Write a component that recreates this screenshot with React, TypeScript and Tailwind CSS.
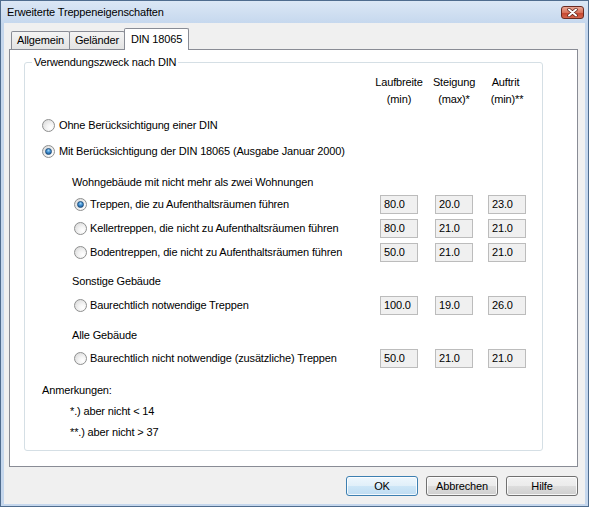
import React from "react";

const font = { fontFamily: '"Liberation Sans", Arial, sans-serif' };

function Radio({ checked = false }: { checked?: boolean }) {
  return (
    <div className="w-[13px] h-[13px] flex-none rounded-full border border-[#8e8f8f] bg-[radial-gradient(circle_at_70%_70%,#ffffff_0%,#f4f4f4_35%,#d4d4d4_100%)] flex items-center justify-center">
      {checked && (
        <div className="w-[7px] h-[7px] rounded-full border border-[#1e4e7c] bg-[radial-gradient(circle_at_50%_30%,#9fd4f6_0%,#3f8ed0_45%,#174d87_100%)]" />
      )}
    </div>
  );
}

function Field({ value }: { value: string }) {
  return (
    <div className="w-[38px] h-[19px] flex-none border border-[#bcbcbc] bg-[#f0f0f0] px-[3px] flex items-center text-black">
      {value}
    </div>
  );
}

function Row({
  label,
  values,
  checked = false,
  className = "",
}: {
  label: string;
  values: string[];
  checked?: boolean;
  className?: string;
}) {
  return (
    <div className={"h-[20px] flex items-center " + className}>
      <div className="w-[355px] flex-none flex items-center pl-[49px] gap-[3px] whitespace-nowrap">
        <Radio checked={checked} />
        <span>{label}</span>
      </div>
      <Field value={values[0]} />
      <div className="w-[17px] flex-none" />
      <Field value={values[1]} />
      <div className="w-[15px] flex-none" />
      <Field value={values[2]} />
    </div>
  );
}

function Label({ text, className = "" }: { text: string; className?: string }) {
  return (
    <div className={"h-[20px] flex items-center pl-[47px] " + className}>
      {text}
    </div>
  );
}

function Tab({ text, active = false }: { text: string; active?: boolean }) {
  if (active) {
    return (
      <div className="relative z-10 -mb-px h-[22px] w-[65px] border border-b-0 border-[#898c95] bg-white flex items-center justify-center rounded-t-[2px] -ml-px">
        {text}
      </div>
    );
  }
  return (
    <div className="h-[18px] border border-b-0 border-[#898c95] bg-[linear-gradient(to_bottom,#f4f4f4,#e3e3e3)] flex items-center justify-center px-[5px] rounded-t-[2px] -ml-px first:ml-0">
      {text}
    </div>
  );
}

function Button({ text, primary = false }: { text: string; primary?: boolean }) {
  return (
    <div
      className={
        "w-[72px] h-[20px] rounded-[3px] border flex items-center justify-center shadow-[inset_0_0_0_1px_rgba(255,255,255,0.8)] " +
        (primary
          ? "border-[#3c7fb1] bg-[linear-gradient(to_bottom,#eef7fd_0%,#e0eff9_50%,#cde6f7_50%,#bedcf2_100%)]"
          : "border-[#707070] bg-[linear-gradient(to_bottom,#f2f2f2_0%,#ebebeb_50%,#dddddd_50%,#cfcfcf_100%)]")
      }
    >
      {text}
    </div>
  );
}

export default function App() {
  return (
    <div
      className="w-[589px] h-[507px] flex flex-col border border-[#4f6c8e] bg-[#c5d7ed] text-[11px] tracking-[-0.15px] text-black"
      style={font}
    >
      {/* title bar */}
      <div className="h-[22px] flex-none flex items-center justify-between pl-[6px] pr-[4px] bg-[linear-gradient(to_bottom,#dbe7f5,#c6d8ee)]">
        <span className="text-[11px]">Erweiterte Treppeneigenschaften</span>
        <div className="w-[23px] h-[13px] rounded-[3px] border border-[#6b2a20] bg-[linear-gradient(to_bottom,#eaa895_0%,#d9735c_50%,#c5462f_55%,#d5654c_100%)] flex items-center justify-center">
          <svg width="11" height="9" viewBox="0 0 11 9">
            <path d="M2 1.5 L9 7.5 M9 1.5 L2 7.5" stroke="#5a2118" strokeWidth="3.4" strokeLinecap="round" />
            <path d="M2 1.5 L9 7.5 M9 1.5 L2 7.5" stroke="#ffffff" strokeWidth="2" strokeLinecap="round" />
          </svg>
        </div>
      </div>

      {/* client */}
      <div className="flex-1 mx-[3px] mb-[2px] bg-[#f0f0f0] flex flex-col">
        <div className="h-[26px] flex-none flex items-end pl-[7px]">
          <Tab text="Allgemein" />
          <Tab text="Geländer" />
          <Tab text="DIN 18065" active />
        </div>

        <div className="ml-[5px] w-[569px] h-[418px] flex-none border border-[#898c95] bg-white">
          <div className="relative mt-[12px] ml-[14px] w-[519px] border border-[#d5dfe5] rounded-[3px] pb-[8px]">
            <span className="absolute -top-[8px] left-[7px] bg-white px-[2px] leading-[14px]">
              Verwendungszweck nach DIN
            </span>

            {/* column headers */}
            <div className="h-[52px] flex pt-[11px] leading-[17px]">
              <div className="w-[355px] flex-none" />
              <div className="w-[38px] flex-none flex flex-col items-center whitespace-nowrap">
                <span>Laufbreite</span>
                <span>(min)</span>
              </div>
              <div className="w-[17px] flex-none" />
              <div className="w-[38px] flex-none flex flex-col items-center whitespace-nowrap">
                <span>Steigung</span>
                <span>(max)*</span>
              </div>
              <div className="w-[15px] flex-none" />
              <div className="w-[38px] flex-none flex flex-col items-center whitespace-nowrap">
                <span className="pr-[3px]">Auftrit</span>
                <span>(min)**</span>
              </div>
            </div>

            <div className="h-[20px] flex items-center pl-[17px] gap-[4px]">
              <Radio />
              <span>Ohne Berücksichtigung einer DIN</span>
            </div>
            <div className="h-[20px] mt-[6px] flex items-center pl-[17px] gap-[4px]">
              <Radio checked />
              <span>Mit Berücksichtigung der DIN 18065 (Ausgabe Januar 2000)</span>
            </div>

            <Label text="Wohngebäude mit nicht mehr als zwei Wohnungen" className="mt-[11px]" />
            <Row
              label="Treppen, die zu Aufenthaltsräumen führen"
              values={["80.0", "20.0", "23.0"]}
              checked
              className="mt-[2px]"
            />
            <Row
              label="Kellertreppen, die nicht zu Aufenthaltsräumen führen"
              values={["80.0", "21.0", "21.0"]}
              className="mt-[4px]"
            />
            <Row
              label="Bodentreppen, die nicht zu Aufenthaltsräumen führen"
              values={["50.0", "21.0", "21.0"]}
              className="mt-[4px]"
            />

            <Label text="Sonstige Gebäude" className="mt-[9px]" />
            <Row
              label="Baurechtlich notwendige Treppen"
              values={["100.0", "19.0", "26.0"]}
              className="mt-[4px]"
            />

            <Label text="Alle Gebäude" className="mt-[10px]" />
            <Row
              label="Baurechtlich nicht notwendige (zusätzliche) Treppen"
              values={["50.0", "21.0", "21.0"]}
              className="mt-[3px]"
            />

            <div className="h-[20px] mt-[12px] flex items-center pl-[17px]">Anmerkungen:</div>
            <div className="h-[20px] mt-[1px] flex items-center pl-[45px]">*.) aber nicht &lt; 14</div>
            <div className="h-[20px] mt-[1px] flex items-center pl-[45px]">**.) aber nicht &gt; 37</div>
          </div>
        </div>

        <div className="mt-[9px] flex justify-end gap-[8px] pr-[7px]">
          <Button text="OK" primary />
          <Button text="Abbrechen" />
          <Button text="Hilfe" />
        </div>
      </div>
    </div>
  );
}
